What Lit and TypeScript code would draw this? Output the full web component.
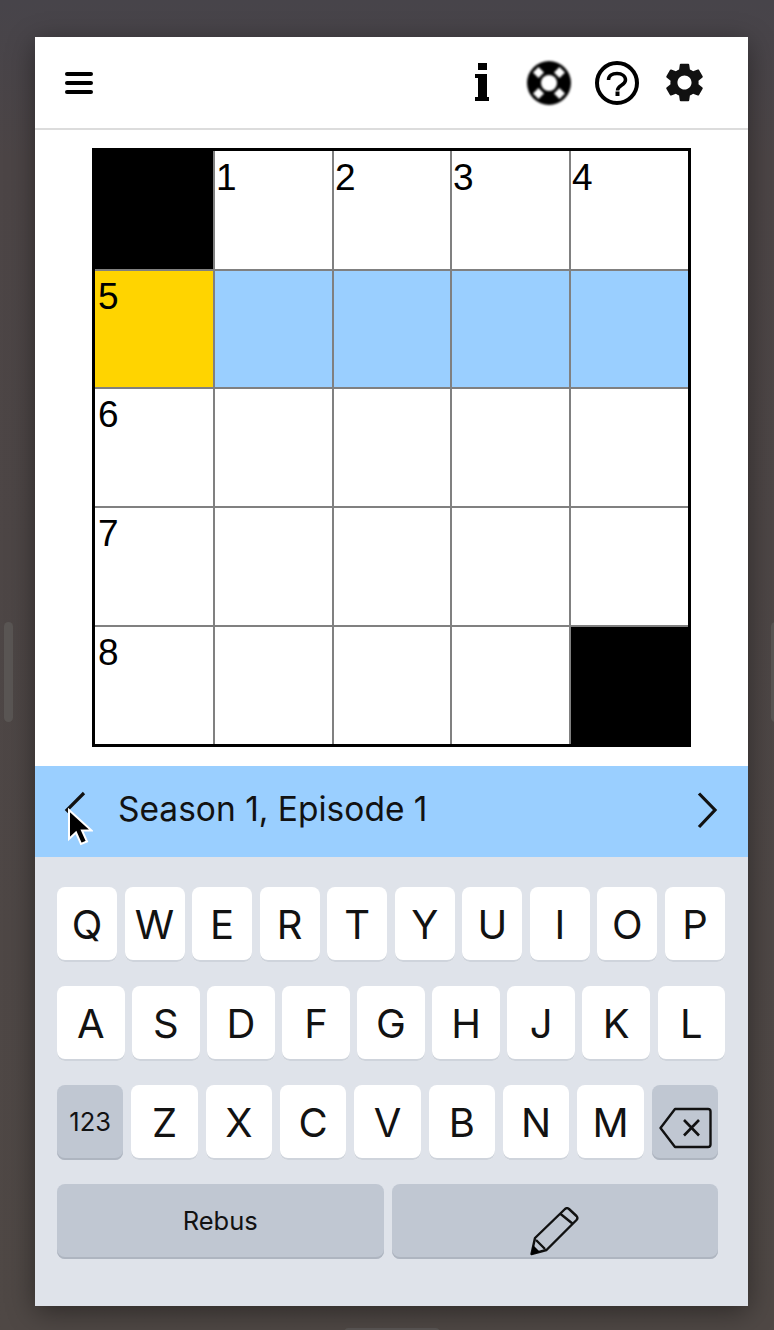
import { LitElement, css, html, svg } from "lit";
import { customElement } from "lit/decorators.js";
import { classMap } from "lit/directives/class-map.js";

// b = black, s = selected, h = highlighted word, "" = open
const CELLS = [
  { t: "b" }, { n: 1 }, { n: 2 }, { n: 3 }, { n: 4 },
  { t: "s", n: 5 }, { t: "h" }, { t: "h" }, { t: "h" }, { t: "h" },
  { n: 6 }, {}, {}, {}, {},
  { n: 7 }, {}, {}, {}, {},
  { n: 8 }, {}, {}, {}, { t: "b" },
] as { t?: string; n?: number }[];

const ROW1 = "QWERTYUIOP".split("");
const ROW2 = "ASDFGHJKL".split("");
const ROW3 = "ZXCVBNM".split("");

const gearPath =
  "M19.14 12.94c.04-.3.06-.61.06-.94 0-.32-.02-.64-.07-.94l2.03-1.58c.18-.14.23-.41.12-.61l-1.92-3.32c-.12-.22-.37-.29-.59-.22l-2.39.96c-.5-.38-1.03-.7-1.62-.94l-.36-2.54c-.04-.24-.24-.41-.48-.41h-3.84c-.24 0-.43.17-.47.41l-.36 2.54c-.59.24-1.13.57-1.62.94l-2.39-.96c-.22-.08-.47 0-.59.22L2.74 8.87c-.12.21-.08.47.12.61l2.03 1.58c-.05.3-.09.63-.09.94s.02.64.07.94l-2.03 1.58c-.18.14-.23.41-.12.61l1.92 3.32c.12.22.37.29.59.22l2.39-.96c.5.38 1.03.7 1.62.94l.36 2.54c.05.24.24.41.48.41h3.84c.24 0 .44-.17.47-.41l.36-2.54c.59-.24 1.13-.56 1.62-.94l2.39.96c.22.08.47 0 .59-.22l1.92-3.32c.12-.22.07-.47-.12-.61l-2.01-1.58zM12 15.6c-1.98 0-3.6-1.62-3.6-3.6s1.62-3.6 3.6-3.6 3.6 1.62 3.6 3.6-1.62 3.6-3.6 3.6z";

const icons = {
  menu: svg`<svg width="30" height="22" viewBox="0 0 30 22"><g fill="#000"><rect x="1" y="0" width="28" height="4" rx="2"/><rect x="1" y="9" width="28" height="4" rx="2"/><rect x="1" y="18" width="28" height="4" rx="2"/></g></svg>`,
  info: svg`<svg class="ic-info" width="16" height="40" viewBox="0 0 16 40"><path fill="#000" d="M4 0h9v7H4zM1 11h12v23h2v4H1v-4h3V15H1z"/></svg>`,
  buoy: svg`<svg class="ic-buoy" width="46" height="46" viewBox="0 0 46 46"><circle cx="23" cy="23" r="22" fill="#000"/><circle cx="23" cy="23" r="8" fill="#fff"/><g fill="#fff"><path d="M12.500 7l5.500 5.500-5.500 5.500L7 12.500z"/><path d="M33.500 7l5.500 5.500-5.500 5.500-5.500-5.500z"/><path d="M12.500 28l5.500 5.500-5.500 5.500L7 33.500z"/><path d="M33.500 28l5.500 5.500-5.500 5.500-5.500-5.500z"/></g></svg>`,
  help: svg`<svg width="46" height="46" viewBox="0 0 46 46"><circle cx="23" cy="23" r="20" fill="none" stroke="#000" stroke-width="4"/><path d="M14.500 20c0-4.200 3.500-6.500 8.500-6.500s8.500 2.600 8.500 6.500c0 5.500-8 5-8 10.500" fill="none" stroke="#000" stroke-width="3.500"/><rect x="21.500" y="31.500" width="4" height="4.500" fill="#000"/></svg>`,
  gear: svg`<svg class="ic-gear" width="47" height="47" viewBox="0 0 24 24"><path fill="#111" d="${gearPath}"/></svg>`,
  back: svg`<svg width="26" height="42" viewBox="0 0 26 42"><path d="M21 3L4 20l17 17" fill="none" stroke="#111" stroke-width="3.200"/></svg>`,
  next: svg`<svg width="26" height="42" viewBox="0 0 26 42"><path d="M5 3.500l16 16.500L5 37" fill="none" stroke="#111" stroke-width="3.200"/></svg>`,
  cursor: svg`<svg width="26" height="40" viewBox="0 0 26 40"><path d="M2 2v29l7-6.500 5 11.500 6-2.500-5-11h9.500z" fill="#000" stroke="#fff" stroke-width="2"/></svg>`,
  del: svg`<svg class="ic-del" width="54" height="42" viewBox="0 0 54 42"><path d="M17 2h33a2.500 2.500 0 0 1 2.500 2.500v33a2.500 2.500 0 0 1-2.500 2.500H17L2.500 21z" fill="none" stroke="#111" stroke-width="2.400" stroke-linejoin="round"/><path d="M26 13l15 15.500M41 13L26 28.500" fill="none" stroke="#111" stroke-width="2.600"/></svg>`,
  pencil: svg`<svg class="ic-pencil" width="50" height="50" viewBox="0 0 50 50"><path d="M1.500 47L5 31 35 2a3 3 0 0 1 4 0l7.500 7a3 3 0 0 1 0 4L16.500 43z" fill="none" stroke="#111" stroke-width="2.400" stroke-linejoin="round"/><path d="M30 6.500L43 17M6 33l9 9" fill="none" stroke="#111" stroke-width="2.400"/><path d="M1 48l2-10 7 7z" fill="#000"/></svg>`,
};

@customElement("app-root")
export class AppRoot extends LitElement {
  static styles = css`
    :host {
      display: block;
      font-family: "Inter", "Liberation Sans", sans-serif;
      color: #121212;
    }
    .stage {
      position: relative;
      height: 1330px;
      box-sizing: border-box;
      padding: 37px 26px 24px 35px;
      overflow: hidden;
      background: linear-gradient(180deg, #47444a 0, #4c4546 12%, #4f4845 100%);
    }
    .scroll-l,
    .scroll-r,
    .scroll-b {
      position: absolute;
      background: #5a5654;
      border-radius: 5px;
    }
    .scroll-l { left: 4px; top: 622px; width: 9px; height: 100px; }
    .scroll-r { right: -6px; top: 622px; width: 9px; height: 100px; }
    .scroll-b { left: 344px; bottom: -7px; width: 96px; height: 9px; }
    .panel {
      position: relative;
      height: 1269px;
      display: flex;
      flex-direction: column;
      background: #fff;
      box-shadow: 0 6px 26px rgba(0, 0, 0, 0.42);
    }
    .toolbar {
      flex: none;
      display: flex;
      align-items: center;
      box-sizing: border-box;
      height: 93px;
      padding: 0 40.5px 0 29px;
      border-bottom: 2px solid #dcdcdc;
    }
    .toolbar svg { display: block; }
    .tools {
      margin-left: auto;
      display: flex;
      align-items: center;
      gap: 22px;
    }
    .ic-info { margin-right: 14px; }
    .ic-buoy { filter: blur(0.9px); }
    .ic-gear { margin-left: -1.5px; }
    .board-wrap {
      flex: none;
      padding: 18px 0 19px 57px;
    }
    .board {
      width: 599px;
      height: 599px;
      box-sizing: border-box;
      border: 3px solid #000;
      display: grid;
      grid-template-columns: 120px 119px 118px 119px 1fr;
      grid-template-rows: 120px 118px 119px 119px 1fr;
      font-family: "Liberation Sans", Arial, sans-serif;
    }
    .cell {
      box-sizing: border-box;
      border-right: 2px solid #808080;
      border-bottom: 2px solid #808080;
      padding: 6px 0 0 1px;
      font-size: 37px;
      line-height: 40px;
      color: #000;
      background: #fff;
    }
    .cell.first-col { padding-left: 3px; }
    .cell.first-row { padding-top: 7px; }
    .cell.end-col { border-right: 0; }
    .cell.end-row { border-bottom: 0; }
    .cell.black { background: #000; }
    .cell.selected { background: #ffd400; }
    .cell.word { background: #9acfff; }
    .clue {
      flex: none;
      height: 91px;
      box-sizing: border-box;
      display: flex;
      align-items: center;
      padding: 0 28px 2px 28px;
      background: #9acfff;
    }
    .clue svg { display: block; flex: none; }
    .clue-text {
      flex: 1;
      padding: 0 0 3px 29px;
      font-size: 33.500px;
      white-space: nowrap;
    }
    .cursor {
      position: absolute;
      left: 32px;
      top: 771px;
    }
    .keyboard {
      flex: 1;
      box-sizing: border-box;
      display: flex;
      flex-direction: column;
      gap: 24px;
      padding: 30px 23px 0 22px;
      background: #dfe3ea;
    }
    .row {
      display: flex;
      gap: 7.5px;
      height: 75px;
    }
    .row.short { margin-right: 7px; gap: 8px; }
    .key {
      flex: 1 1 0;
      min-width: 0;
      display: flex;
      align-items: center;
      justify-content: center;
      box-sizing: border-box;
      background: #fff;
      border-radius: 8px;
      box-shadow: inset 0 -2px 0 #cfd4dc;
      font-size: 40px;
      padding-bottom: 1px;
    }
    .key.alt {
      background: #c0c7d2;
      box-shadow: inset 0 -2px 0 #aeb5c0;
      font-size: 25.500px;
      padding: 0 0 3px;
    }
    .key svg { display: block; }
    .ic-del { margin-top: 14px; }
    .ic-pencil { margin: 24px -1px 0 0; }
  `;

  private cellClass(c: { t?: string }, i: number) {
    return classMap({
      cell: true,
      black: c.t === "b",
      selected: c.t === "s",
      word: c.t === "h",
      "first-col": i % 5 === 0,
      "first-row": i < 5,
      "end-col": i % 5 === 4,
      "end-row": i >= 20,
    });
  }

  render() {
    const letter = (k: string) => html`<div class="key">${k}</div>`;
    return html`
      <div class="stage">
        <div class="scroll-l"></div>
        <div class="scroll-r"></div>
        <div class="scroll-b"></div>
        <div class="panel">
          <div class="toolbar">
            ${icons.menu}
            <div class="tools">
              ${icons.info}${icons.buoy}${icons.help}${icons.gear}
            </div>
          </div>
          <div class="board-wrap">
            <div class="board">
              ${CELLS.map(
                (c, i) => html`<div class=${this.cellClass(c, i)}>${c.n ?? ""}</div>`
              )}
            </div>
          </div>
          <div class="clue">
            ${icons.back}
            <div class="clue-text">Season 1, Episode 1</div>
            ${icons.next}
          </div>
          <div class="keyboard">
            <div class="row">${ROW1.map(letter)}</div>
            <div class="row">${ROW2.map(letter)}</div>
            <div class="row short">
              <div class="key alt">123</div>
              ${ROW3.map(letter)}
              <div class="key alt">${icons.del}</div>
            </div>
            <div class="row short">
              <div class="key alt">Rebus</div>
              <div class="key alt">${icons.pencil}</div>
            </div>
          </div>
          <div class="cursor">${icons.cursor}</div>
        </div>
      </div>
    `;
  }
}
